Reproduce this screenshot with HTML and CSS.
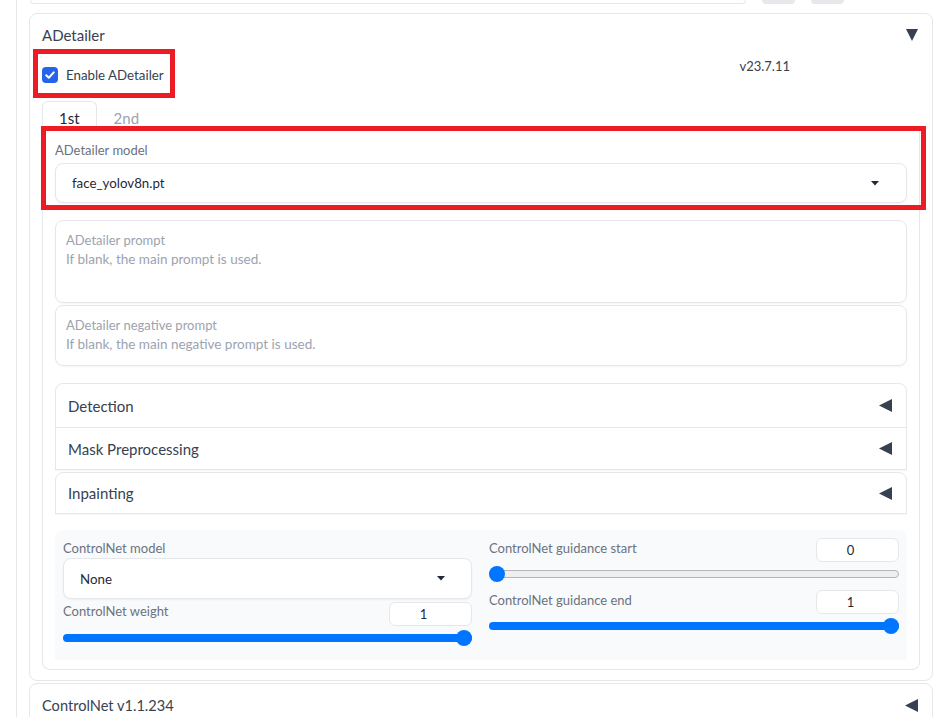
FILE: index.html
```html
<!DOCTYPE html>
<html lang="en">
<head>
<meta charset="utf-8">
<title>ADetailer</title>
<link rel="stylesheet" href="styles.css">
</head>
<body>
<div class="page">
  <div class="column">
    <div class="top-row">
      <div class="top-input"></div>
      <div class="top-btn"></div>
      <div class="top-btn"></div>
    </div>

    <section class="acc adetailer">
      <div class="acc-head">
        <span>ADetailer</span>
        <svg class="tri-down" width="12" height="12" viewBox="0 0 12 12"><polygon points="0,0 12,0 6,12"/></svg>
      </div>
      <div class="enable-row">
        <label class="check">
          <span class="check-box"><svg width="16" height="16" viewBox="0 0 16 16"><path d="M4.2 8.3 L6.8 10.8 L11.8 5.4" fill="none" stroke="#fff" stroke-width="2" stroke-linecap="round" stroke-linejoin="round"/></svg></span>
          <span>Enable ADetailer</span>
        </label>
        <div class="version">v23.7.11</div>
      </div>

      <div class="tabs">
        <div class="tab-nav">
          <button class="tab selected">1st</button>
          <button class="tab">2nd</button>
        </div>
        <div class="tab-panel">
          <div class="field">
            <div class="field-label">ADetailer model</div>
            <div class="dropdown">
              <span>face_yolov8n.pt</span>
              <svg width="8" height="5" viewBox="0 0 8 5"><polygon points="0,0 8,0 4,4.5"/></svg>
            </div>
          </div>

          <div class="prompt-group">
            <label class="textbox">
              <span class="tb-label">ADetailer prompt</span>
              <textarea class="ta-2" placeholder="If blank, the main prompt is used."></textarea>
            </label>
            <label class="textbox">
              <span class="tb-label">ADetailer negative prompt</span>
              <textarea class="ta-1" placeholder="If blank, the main negative prompt is used."></textarea>
            </label>
          </div>

          <div class="sub-accs">
            <div class="sub first"><span>Detection</span><svg class="tri-left" width="13" height="13" viewBox="0 0 13 13"><polygon points="13,0 13,13 0,6.5"/></svg></div>
            <div class="sub mid"><span>Mask Preprocessing</span><svg class="tri-left" width="13" height="13" viewBox="0 0 13 13"><polygon points="13,0 13,13 0,6.5"/></svg></div>
            <div class="sub last"><span>Inpainting</span><svg class="tri-left" width="13" height="13" viewBox="0 0 13 13"><polygon points="13,0 13,13 0,6.5"/></svg></div>
          </div>

          <div class="cn-panel">
            <div class="cn-col">
              <div class="field-label">ControlNet model</div>
              <div class="dropdown cn-dropdown">
                <span>None</span>
                <svg width="8" height="5" viewBox="0 0 8 5"><polygon points="0,0 8,0 4,4.5"/></svg>
              </div>
              <div class="slider weight">
                <div class="slider-head">
                  <span class="field-label">ControlNet weight</span>
                  <span class="num">1</span>
                </div>
                <div class="track-wrap"><div class="track full"></div><div class="thumb end"></div></div>
              </div>
            </div>
            <div class="cn-col">
              <div class="slider">
                <div class="slider-head">
                  <span class="field-label">ControlNet guidance start</span>
                  <span class="num">0</span>
                </div>
                <div class="track-wrap"><div class="track empty"></div><div class="thumb start"></div></div>
              </div>
              <div class="slider">
                <div class="slider-head">
                  <span class="field-label">ControlNet guidance end</span>
                  <span class="num">1</span>
                </div>
                <div class="track-wrap"><div class="track full"></div><div class="thumb end"></div></div>
              </div>
            </div>
          </div>
        </div>
      </div>
    </section>

    <section class="acc controlnet">
      <div class="acc-head">
        <span>ControlNet v1.1.234</span>
        <svg class="tri-left" width="13" height="13" viewBox="0 0 13 13"><polygon points="13,0 13,13 0,6.5"/></svg>
      </div>
    </section>
  </div>

  <div class="mark mark-1"></div>
  <div class="mark mark-2"></div>
</div>
</body>
</html>
```

FILE: styles.css
```css
html, body {
  margin: 0;
  padding: 0;
}

body {
  height: 717px;
  overflow: hidden;
  background: #ffffff;
  font-family: Lato, "Noto Sans", sans-serif;
  color: #374151;
}

.page {
  position: relative;
  height: 717px;
}

.column {
  margin-left: 16px;
  border-left: 1px solid #e5e7eb;
  padding-left: 12px;
  width: 904px;
  height: 717px;
}

/* clipped tail of the controls above */
.top-row {
  display: flex;
  gap: 16px;
  height: 4px;
}

.top-input {
  margin-left: 1px;
  width: 714px;
  height: 3px;
  border: 1px solid #e5e7eb;
  border-top: none;
  border-radius: 0 0 8px 8px;
}

.top-btn {
  width: 33px;
  height: 4px;
  background: #e7e8eb;
  border-radius: 0 0 6px 6px;
}

/* accordions */
.acc {
  border: 1px solid #e5e7eb;
  border-radius: 8px;
  padding: 0 12px 10px;
  background: #ffffff;
}

.adetailer {
  margin-top: 9px;
}

.controlnet {
  margin-top: 2px;
}

.acc-head {
  height: 42px;
  display: flex;
  align-items: center;
  justify-content: space-between;
  font-size: 15px;
  color: #374151;
}

.controlnet .acc-head {
  font-size: 14.6px;
}

.acc-head svg {
  margin-right: 2px;
}

.tri-down polygon,
.tri-left polygon {
  fill: #374151;
}

/* enable row */
.enable-row {
  height: 45px;
  display: flex;
  align-items: flex-start;
}

.check {
  display: flex;
  align-items: center;
  gap: 8px;
  padding-top: 11px;
  font-size: 13.3px;
  line-height: 16px;
  color: #374151;
}

.check-box {
  width: 16px;
  height: 16px;
  border-radius: 4px;
  background: #2563eb;
  display: flex;
}

.version {
  margin-left: auto;
  margin-right: 130px;
  font-size: 13px;
  line-height: 20px;
  color: #374151;
}

/* tabs */
.tab-nav {
  display: flex;
  align-items: flex-start;
  height: 26px;
  border-bottom: 1px solid #e5e7eb;
}

.tab {
  box-sizing: border-box;
  height: 27px;
  margin: 0;
  padding: 6px 16px 0;
  border: 1px solid transparent;
  border-bottom: none;
  border-radius: 6px 6px 0 0;
  background: none;
  font-family: inherit;
  font-size: 15px;
  line-height: 20px;
  color: #9ca3af;
}

.tab.selected {
  border-color: #e5e7eb;
  background: #ffffff;
  color: #1f2937;
}

.tab-panel {
  border: 1px solid #e5e7eb;
  border-top: none;
  border-radius: 0 0 8px 8px;
  padding: 12px 12px 9px;
  display: flex;
  flex-direction: column;
}

.field-label {
  font-size: 13px;
  line-height: 20px;
  color: #6b7280;
}

.field .field-label {
  margin-bottom: 3px;
}

.dropdown {
  box-sizing: border-box;
  height: 40px;
  border: 1px solid #e5e7eb;
  border-radius: 8px;
  background: #ffffff;
  box-shadow: 0 1px 2px rgba(0, 0, 0, 0.05);
  display: flex;
  align-items: center;
  justify-content: space-between;
  padding: 0 27px 0 16px;
  font-size: 13.3px;
  color: #1f2937;
}

.dropdown polygon {
  fill: #1f2937;
}

/* prompts */
.prompt-group {
  margin-top: 17px;
  display: flex;
  flex-direction: column;
  gap: 2px;
}

.textbox {
  border: 1px solid #e5e7eb;
  border-radius: 8px;
  padding: 9px 10px;
  display: flex;
  flex-direction: column;
  box-shadow: 0 1px 2px rgba(0, 0, 0, 0.04);
}

.tb-label {
  font-size: 13px;
  line-height: 20px;
  color: #9ca3af;
}

.textbox textarea {
  display: block;
  border: none;
  outline: none;
  margin: -1px 0 0;
  padding: 0;
  resize: none;
  background: transparent;
  font-family: inherit;
  font-size: 13.5px;
  line-height: 21px;
  color: #1f2937;
}

.textbox textarea::placeholder {
  color: #9ca3af;
}

.ta-2 {
  height: 44px;
}

.ta-1 {
  height: 22px;
}

/* sub accordions */
.sub-accs {
  margin-top: 17px;
  display: flex;
  flex-direction: column;
}

.sub {
  box-sizing: border-box;
  display: flex;
  align-items: center;
  justify-content: space-between;
  padding: 0 14px 0 12px;
  border: 1px solid #e5e7eb;
  font-size: 15px;
  color: #374151;
  background: #ffffff;
  box-shadow: 0 1px 1px rgba(0, 0, 0, 0.03);
}

.sub.first {
  height: 45px;
  border-radius: 8px 8px 0 0;
}

.sub.mid {
  height: 42px;
  border-top: none;
}

.sub.last {
  height: 42px;
  margin-top: 2px;
  border-radius: 8px 8px 0 0;
}

/* controlnet panel */
.cn-panel {
  margin-top: 16px;
  background: #f9fafb;
  border-radius: 8px 8px 0 0;
  padding: 8px 9px 14px 8px;
  display: grid;
  grid-template-columns: 409px 410px;
  column-gap: 17px;
  align-items: start;
}

.cn-dropdown {
  height: 41px;
  padding-right: 26px;
}

.slider {
  margin-bottom: 8px;
}

.slider.weight {
  margin-top: 3px;
  margin-bottom: 0;
}

.slider-head {
  height: 24px;
  display: flex;
  align-items: flex-start;
  justify-content: space-between;
}

.slider.weight .slider-head .field-label {
  margin-top: -1px;
}

.num {
  box-sizing: border-box;
  width: 83px;
  height: 24px;
  padding-right: 14px;
  border: 1px solid #e5e7eb;
  border-radius: 6px;
  background: #ffffff;
  display: flex;
  align-items: center;
  justify-content: center;
  font-size: 13px;
  color: #1f2937;
}

.track-wrap {
  position: relative;
  margin-top: 4px;
  height: 16px;
  display: flex;
  align-items: center;
}

.track {
  box-sizing: border-box;
  width: 100%;
  height: 8px;
  border-radius: 4px;
}

.track.full {
  background: #0075ff;
}

.track.empty {
  background: #efefef;
  border: 1px solid #b5b5b5;
}

.thumb {
  position: absolute;
  top: 0;
  width: 16px;
  height: 16px;
  border-radius: 50%;
  background: #0075ff;
}

.thumb.start {
  left: 0;
}

.thumb.end {
  right: 0;
}

/* red annotation frames */
.mark {
  position: absolute;
  box-sizing: border-box;
  border: 5px solid #ed1c24;
}

.mark-1 {
  left: 33px;
  top: 49px;
  width: 142px;
  height: 49px;
}

.mark-2 {
  left: 41px;
  top: 126px;
  width: 885px;
  height: 84px;
}
```
